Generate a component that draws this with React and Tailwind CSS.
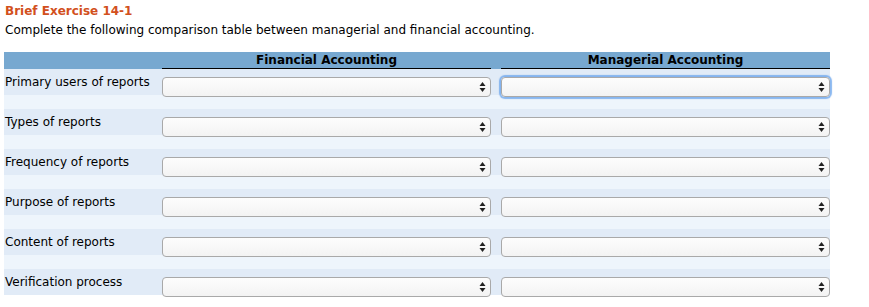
import React from 'react';

const rows = [
    'Primary users of reports',
    'Types of reports',
    'Frequency of reports',
    'Purpose of reports',
    'Content of reports',
    'Verification process',
];

const Arrows = () => (
    <svg width="7" height="10" viewBox="0 0 7 10" className="absolute right-[5px] top-[5px] pointer-events-none">
        <polygon points="0.5,4 3.5,0 6.5,4" fill="#222" />
        <polygon points="0.5,6 3.5,10 6.5,6" fill="#222" />
    </svg>
);

const Dropdown = ({ focused }) => (
    <div className="relative mt-[8px] h-[20px] w-full">
        <select
            className={
                'appearance-none block w-full h-[20px] rounded-[4px] border border-[#a9a9a9] bg-gradient-to-b from-[#fdfdfd] to-[#f3f3f3] outline-none ' +
                (focused ? 'shadow-[0_0_1px_2px_rgba(100,160,235,0.75)]' : '')
            }
            defaultValue=""
        >
            <option value=""></option>
        </select>
        <Arrows />
    </div>
);

const App = () => {
    return (
        <div className="min-h-[307px] bg-white font-['DejaVu_Sans','Verdana',sans-serif] text-[12px] text-black">
            <div className="px-[5px] pt-[3px]">
                <h1 className="text-[12px] leading-[16px] font-bold text-[#d2501d]">Brief Exercise 14-1</h1>
                <p className="mt-[3px] leading-[16px]">
                    Complete the following comparison table between managerial and financial accounting.
                </p>
            </div>

            <div className="ml-[4px] mt-[14px] w-[826px]">
                {/* header */}
                <div className="grid grid-cols-[158px_329px_10px_329px] h-[17px] bg-[#77a8d0]">
                    <div></div>
                    <div className="border-b border-black text-center font-bold leading-[16px]">Financial Accounting</div>
                    <div></div>
                    <div className="border-b border-black text-center font-bold leading-[16px]">Managerial Accounting</div>
                </div>

                {rows.map((label, i) => (
                    <div key={label}>
                        <div className="grid grid-cols-[158px_329px_10px_329px] h-[26px] bg-[#e1ebf7]">
                            <div className="pl-[1px] leading-[26px] whitespace-nowrap">{label}</div>
                            <Dropdown />
                            <div></div>
                            <Dropdown focused={i === 0} />
                        </div>
                        {i < rows.length - 1 && <div className="h-[14px] bg-[#eef5fc]"></div>}
                    </div>
                ))}
            </div>
        </div>
    );
};

export default App;
